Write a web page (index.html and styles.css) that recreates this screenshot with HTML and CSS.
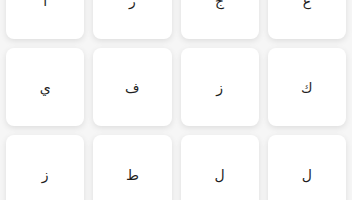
FILE: index.html
```html
<!DOCTYPE html>
<html lang="ar">
<head>
  <meta charset="UTF-8">
  <meta name="viewport" content="width=device-width, initial-scale=1.0">
  <title>الحروف</title>
  <link rel="stylesheet" href="styles.css">
</head>
<body>
  <div class="letters">
    <div class="card">ا</div>
    <div class="card">ر</div>
    <div class="card">ج</div>
    <div class="card">غ</div>
    <div class="card">ي</div>
    <div class="card">ف</div>
    <div class="card">ز</div>
    <div class="card">ك</div>
    <div class="card">ز</div>
    <div class="card">ط</div>
    <div class="card">ل</div>
    <div class="card">ل</div>
  </div>
</body>
</html>
```

FILE: styles.css
```css
body {
  margin: 0;
  background: #f6f6f6;
  font-family: "DejaVu Sans", "Noto Sans", sans-serif;
  color: #1f1f1f;
  overflow: hidden;
}
.letters {
  display: grid;
  grid-template-columns: repeat(4, 1fr);
  gap: 9px;
  padding: 6px;
  margin-top: -45px;
}
.card {
  height: 78px;
  background: #ffffff;
  border-radius: 8px;
  box-shadow: 0 2px 6px rgba(0, 0, 0, 0.1);
  display: flex;
  align-items: center;
  justify-content: center;
  font-size: 14px;
  padding-top: 2px;
  box-sizing: border-box;
}
```
